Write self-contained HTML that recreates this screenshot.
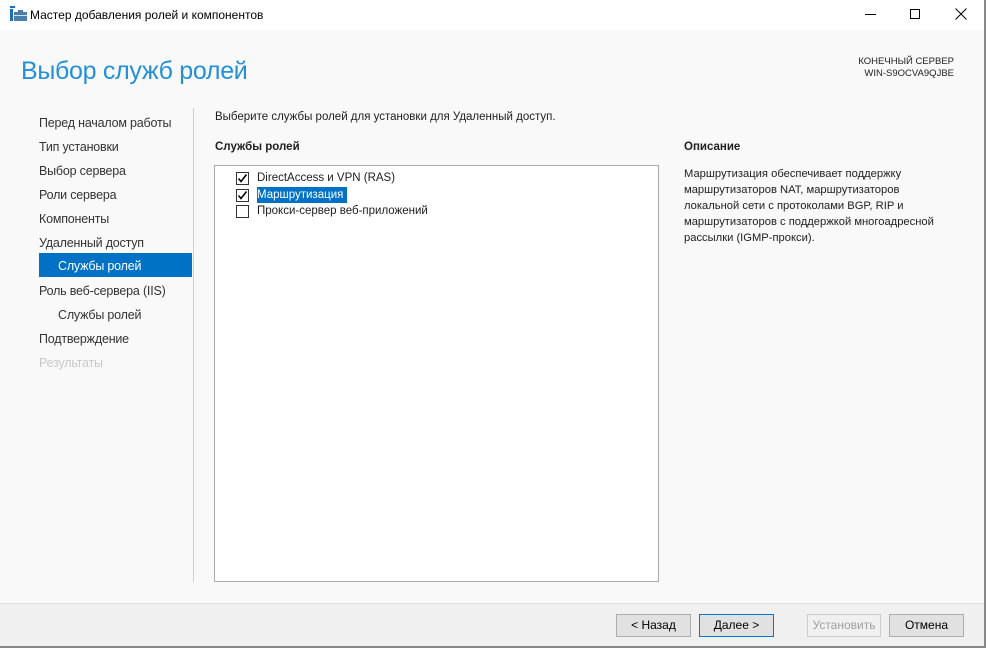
<!DOCTYPE html>
<html><head><meta charset="utf-8"><style>
*{margin:0;padding:0;box-sizing:border-box}
body{width:986px;height:648px;overflow:hidden;background:#fff;font-family:"Liberation Sans",sans-serif;font-size:12px;color:#1e1e1e;position:relative}
.a{position:absolute;white-space:nowrap}
.nav{position:absolute;left:39px;font-size:12.5px;color:#333;letter-spacing:-0.2px}
.btn{position:absolute;top:614px;height:23px;background:#e1e1e1;border:1px solid #adadad;text-align:center;line-height:21px;font-size:12px;color:#000}
.cb{position:absolute;left:236px;width:13px;height:13px;border:1px solid #333;background:#fff}
</style></head><body>
<div class="a" style="left:0;top:0;width:986px;height:30px;background:#fff"></div>
<svg class="a" style="left:10px;top:6px" width="18" height="16" viewBox="0 0 18 16"><rect x="0" y="0" width="5" height="2" fill="#1b6fb8"/><rect x="0" y="3" width="3" height="12" fill="#1b6fb8"/><rect x="4" y="6" width="13" height="9" fill="#4a7ea8"/><rect x="8" y="4" width="5" height="2" fill="#4a7ea8"/><rect x="4" y="9" width="13" height="1" fill="#cfe0ee"/></svg>
<div class="a" style="left:30px;top:8px;font-size:12px;color:#000">Мастер добавления ролей и компонентов</div>
<div class="a" style="left:865px;top:14px;width:11px;height:1px;background:#000"></div>
<div class="a" style="left:910px;top:9px;width:10px;height:10px;border:1px solid #000"></div>
<svg class="a" style="left:955px;top:8px" width="12" height="12"><path d="M0.5 0.5L11.5 11.5M11.5 0.5L0.5 11.5" stroke="#000" stroke-width="1"/></svg>
<div class="a" style="left:0;top:30px;width:984px;height:573px;background:#f9f9f9"></div>
<div class="a" style="left:984px;top:0;width:2px;height:648px;background:#888"></div>
<div class="a" style="left:21px;top:57px;font-size:25px;color:#2390d8;letter-spacing:-0.3px">Выбор служб ролей</div>
<div class="a" style="left:820px;top:56px;width:134px;text-align:right;font-size:9.5px;line-height:12px;color:#222">КОНЕЧНЫЙ СЕРВЕР<br>WIN-S9OCVA9QJBE</div>
<div class="nav" style="top:116px">Перед началом работы</div>
<div class="nav" style="top:140px">Тип установки</div>
<div class="nav" style="top:164px">Выбор сервера</div>
<div class="nav" style="top:188px">Роли сервера</div>
<div class="nav" style="top:212px">Компоненты</div>
<div class="nav" style="top:236px">Удаленный доступ</div>
<div class="a" style="left:39px;top:253px;width:153px;height:24px;background:#0072c6"></div>
<div class="nav" style="left:58px;top:259px;color:#fff">Службы ролей</div>
<div class="nav" style="top:284px">Роль веб-сервера (IIS)</div>
<div class="nav" style="left:58px;top:308px">Службы ролей</div>
<div class="nav" style="top:332px">Подтверждение</div>
<div class="nav" style="top:356px;color:#c8c8c8">Результаты</div>
<div class="a" style="left:193px;top:108px;width:1px;height:474px;background:#d0d0d0"></div>
<div class="a" style="left:215px;top:111px;font-size:11.5px">Выберите службы ролей для установки для Удаленный доступ.</div>
<div class="a" style="left:215px;top:141px;font-size:11.5px;font-weight:bold">Службы ролей</div>
<div class="a" style="left:214px;top:165px;width:445px;height:417px;background:#fff;border:1px solid #aaa"></div>
<div class="cb" style="top:172px"></div><svg class="a" style="left:237px;top:173px" width="11" height="11"><path d="M1.5 5.5L4 8.5L9.5 1.5" stroke="#000" stroke-width="1.6" fill="none"/></svg>
<div class="a" style="left:257px;top:172px;font-size:11.5px">DirectAccess и VPN (RAS)</div>
<div class="cb" style="top:189px"></div><svg class="a" style="left:237px;top:190px" width="11" height="11"><path d="M1.5 5.5L4 8.5L9.5 1.5" stroke="#000" stroke-width="1.6" fill="none"/></svg>
<div class="a" style="left:257px;top:187px;height:16px;width:90px;background:#0072c6"></div>
<div class="a" style="left:257px;top:189px;font-size:11.5px;color:#fff">Маршрутизация</div>
<div class="cb" style="top:205px"></div>
<div class="a" style="left:257px;top:205px;font-size:11.5px">Прокси-сервер веб-приложений</div>
<div class="a" style="left:684px;top:141px;font-size:11.5px;font-weight:bold">Описание</div>
<div class="a" style="left:684px;top:166px;font-size:11.2px;line-height:16px;white-space:normal;width:268px">Маршрутизация обеспечивает поддержку маршрутизаторов NAT, маршрутизаторов локальной сети с протоколами BGP, RIP и маршрутизаторов с поддержкой многоадресной рассылки (IGMP-прокси).</div>
<div class="a" style="left:0;top:603px;width:984px;height:1px;background:#dfdfdf"></div>
<div class="a" style="left:0;top:604px;width:984px;height:42px;background:#f0f0f0"></div>
<div class="a" style="left:0;top:646px;width:986px;height:2px;background:#888"></div>
<div class="btn" style="left:616px;width:75px">&lt; Назад</div>
<div class="btn" style="left:699px;width:75px;border:1px solid #0078d7">Далее &gt;</div>
<div class="btn" style="left:807px;width:74px;background:#f0f0f0;border-color:#ccc;color:#a0a0a0">Установить</div>
<div class="btn" style="left:889px;width:75px">Отмена</div>
</body></html>
